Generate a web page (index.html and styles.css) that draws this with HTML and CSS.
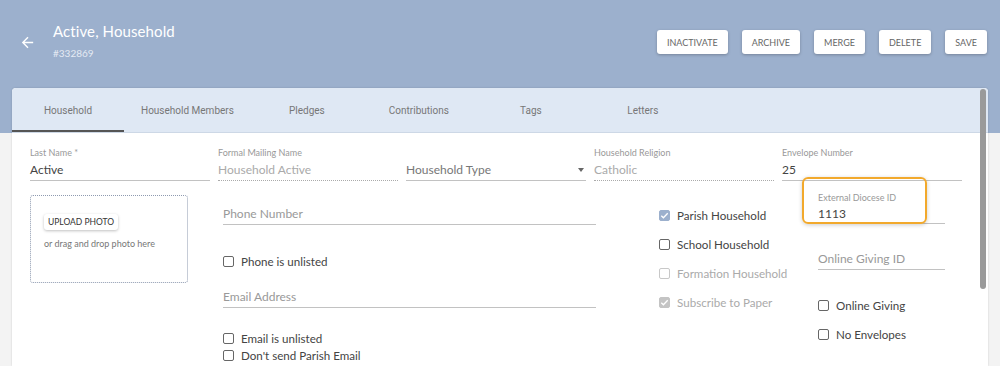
FILE: index.html
```html
<!DOCTYPE html>
<html lang="en">
<head>
    <meta charset="UTF-8">
    <meta name="viewport" content="width=device-width, initial-scale=1.0">
    <title>Active, Household</title>
    <link rel="stylesheet" href="styles.css">
</head>

<body>
    <header class="topbar">
        <button class="back" aria-label="Back">
            <svg viewBox="0 0 24 24" width="17" height="17"><path d="M20 11H7.83l5.59-5.59L12 4l-8 8 8 8 1.41-1.41L7.83 13H20v-2z"/></svg>
        </button>
        <div class="title-block">
            <h1>Active, Household</h1>
            <div class="record-id">#332869</div>
        </div>
        <div class="actions">
            <button class="btn">Inactivate</button>
            <button class="btn">Archive</button>
            <button class="btn">Merge</button>
            <button class="btn">Delete</button>
            <button class="btn">Save</button>
        </div>
    </header>

    <main class="card">
        <nav class="tabs">
            <a class="tab active">Household</a>
            <a class="tab">Household Members</a>
            <a class="tab">Pledges</a>
            <a class="tab">Contributions</a>
            <a class="tab">Tags</a>
            <a class="tab">Letters</a>
        </nav>
        <div class="scroll-thumb"></div>

        <section class="form">
            <div class="row-top">
                <div class="field">
                    <label>Last Name *</label>
                    <div class="value">Active</div>
                </div>
                <div class="field">
                    <label>Formal Mailing Name</label>
                    <div class="value muted">Household Active</div>
                </div>
                <div class="field">
                    <label>&nbsp;</label>
                    <div class="value select">Household Type <span class="caret"></span></div>
                </div>
                <div class="field">
                    <label>Household Religion</label>
                    <div class="value muted">Catholic</div>
                </div>
                <div class="field">
                    <label>Envelope Number</label>
                    <div class="value">25</div>
                </div>
            </div>

            <div class="row-main">
                <div class="photo">
                    <button class="upload">UPLOAD PHOTO</button>
                    <p class="drop-hint">or drag and drop photo here</p>
                </div>

                <div class="contact">
                    <div class="value placeholder">Phone Number</div>
                    <label class="check gap-phone"><span class="box"></span>Phone is unlisted</label>
                    <div class="value placeholder gap-email">Email Address</div>
                    <label class="check gap-unlisted"><span class="box"></span>Email is unlisted</label>
                    <label class="check tight"><span class="box"></span>Don't send Parish Email</label>
                </div>

                <div class="flags">
                    <label class="check"><span class="box checked"><svg viewBox="0 0 12 12"><path d="M2.5 6.2l2.3 2.3 4.7-5"/></svg></span>Parish Household</label>
                    <label class="check"><span class="box"></span>School Household</label>
                    <label class="check disabled"><span class="box"></span>Formation Household</label>
                    <label class="check disabled"><span class="box checked grey"><svg viewBox="0 0 12 12"><path d="M2.5 6.2l2.3 2.3 4.7-5"/></svg></span>Subscribe to Paper</label>
                </div>

                <div class="extra">
                    <div class="field highlighted">
                        <label>External Diocese ID</label>
                        <div class="value">1113</div>
                        <div class="highlight"></div>
                    </div>
                    <div class="value placeholder gap-giving">Online Giving ID</div>
                    <label class="check gap-online"><span class="box"></span>Online Giving</label>
                    <label class="check gap-env"><span class="box"></span>No Envelopes</label>
                </div>
            </div>
        </section>
    </main>
</body>
</html>
```

FILE: styles.css
```css
html, body{
    margin: 0;
    height: 100%;
    overflow: hidden;
}

body{
    background: #f3f3f3 linear-gradient(#9cb0cd, #9cb0cd) no-repeat;
    background-size: 100% 133px;
    font-family: Lato, "Open Sans", sans-serif;
    color: #444;
}

/* header */
.topbar{
    display: flex;
    align-items: flex-start;
    height: 88px;
    padding: 0 13px 0 19px;
    box-sizing: border-box;
}

.back{
    margin-top: 34px;
    padding: 0;
    border: none;
    background: none;
    width: 17px;
    height: 17px;
}

.back svg{
    fill: #fff;
    display: block;
}

.title-block{
    margin-left: 17px;
    padding-top: 22px;
    color: #fff;
}

.title-block h1{
    margin: 0;
    font-size: 15px;
    line-height: 18px;
    font-weight: 400;
    letter-spacing: .1px;
}

.record-id{
    margin-top: 7px;
    font-size: 10px;
    line-height: 12px;
    color: #e4eaf3;
}

.actions{
    margin-left: auto;
    margin-top: 30px;
    display: flex;
    gap: 14px;
}

.btn{
    height: 24px;
    padding: 0 10px;
    background: #fff;
    border: none;
    border-radius: 3px;
    box-shadow: 0 1px 3px rgba(0,0,0,.25);
    font-family: Lato, sans-serif;
    font-size: 9px;
    text-transform: uppercase;
    color: #666;
}

/* card + tabs */
.card{
    position: relative;
    margin: 0 12px;
    height: 278px;
    background: #fff;
    border-radius: 4px 4px 0 0;
    box-shadow: 0 0 2px rgba(0,0,0,.18);
}

.tabs{
    display: flex;
    height: 45px;
    box-sizing: border-box;
    background: #dfe8f4;
    border-bottom: 1px solid #cdd8e6;
    border-radius: 4px 4px 0 0;
}

.tab{
    min-width: 112px;
    padding: 2px 17px 0;
    box-sizing: border-box;
    display: flex;
    align-items: center;
    justify-content: center;
    border-bottom: 2px solid transparent;
    font-family: Roboto, sans-serif;
    font-size: 10px;
    color: #777;
}

.tab.active{
    border-bottom-color: #555;
}

.scroll-thumb{
    position: absolute;
    right: 2px;
    top: 1px;
    width: 6px;
    height: 200px;
    border-radius: 3px;
    background: #9a9a9a;
}

/* form */
.form{
    padding: 0 18px;
}

.row-top{
    display: grid;
    grid-template-columns: repeat(5, 180px);
    gap: 8px;
    padding-top: 14px;
}

.field label{
    display: block;
    font-size: 9px;
    line-height: 12px;
    color: #999;
    margin-bottom: 3px;
}

.value{
    font-size: 12px;
    line-height: 16px;
    padding-bottom: 2px;
    border-bottom: 1px solid #c2c2c2;
    color: #444;
}

.value.muted{
    color: #aaa;
    border-bottom: 1px dotted #aaa;
}

.value.placeholder{
    color: #999;
}

.value.select{
    display: flex;
    justify-content: space-between;
    align-items: center;
    color: #777;
}

.caret{
    width: 0;
    height: 0;
    margin-right: 2px;
    border-left: 3.5px solid transparent;
    border-right: 3.5px solid transparent;
    border-top: 4px solid #666;
}

.row-main{
    display: flex;
    align-items: flex-start;
}

.photo{
    width: 158px;
    height: 88px;
    margin-top: 14px;
    box-sizing: border-box;
    border: 1px dotted #8e9ab0;
    border-radius: 3px;
    padding: 13px 0 0 13px;
}

.upload{
    height: 16px;
    padding: 0 4px;
    border: none;
    border-radius: 3px;
    background: #fff;
    box-shadow: 0 1px 3px rgba(0,0,0,.25);
    font-family: Lato, sans-serif;
    font-size: 8.5px;
    color: #333;
}

.drop-hint{
    margin: 8px 0 0;
    font-size: 9px;
    color: #777;
}

.contact{
    width: 373px;
    margin-left: 35px;
    margin-top: 25px;
}

.check{
    display: flex;
    align-items: center;
    height: 16px;
    font-size: 11.6px;
    color: #444;
}

.box{
    width: 11px;
    height: 11px;
    box-sizing: border-box;
    border: 1px solid #666;
    border-radius: 2px;
    margin-right: 7px;
    flex: none;
    display: flex;
}

.box.checked{
    background: #9cb0cd;
    border-color: #9cb0cd;
}

.box.grey{
    background: #c4c4c4;
    border-color: #c4c4c4;
}

.box svg{
    width: 11px;
    height: 11px;
    margin: -1px;
    fill: none;
    stroke: #fff;
    stroke-width: 1.4;
}

.check.disabled{
    color: #aaa;
}

.check.disabled .box{
    border-color: #c8c8c8;
}

.check.disabled .box.grey{
    border-color: #c4c4c4;
}

.gap-phone{ margin-top: 28px; }
.gap-email{ margin-top: 20px; }
.gap-unlisted{ margin-top: 22px; }
.tight{ margin-top: 1px; }

.flags{
    width: 159px;
    margin-left: 63px;
    margin-top: 26px;
    display: flex;
    flex-direction: column;
    gap: 13px;
}

.extra{
    width: 127px;
    margin-top: 11px;
}

.highlighted{
    position: relative;
}

.highlighted label{
    margin-bottom: 2px;
}

.highlighted .value{
    padding-bottom: 1px;
}

.highlight{
    position: absolute;
    left: -16px;
    top: -15px;
    width: 125px;
    height: 47px;
    box-sizing: border-box;
    border: 2px solid #f2a92c;
    border-radius: 6px;
    box-shadow: 0 1px 4px rgba(0,0,0,.2);
}

.gap-giving{ margin-top: 27px; }
.gap-online{ margin-top: 27px; }
.gap-env{ margin-top: 13px; }
```
